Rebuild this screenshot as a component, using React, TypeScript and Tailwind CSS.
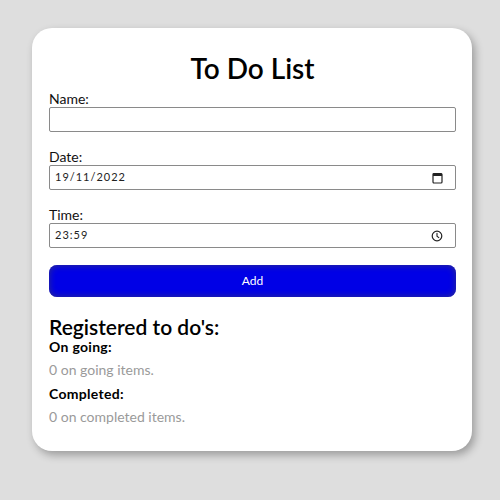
import React from 'react';

const CalendarIcon = () => (
  <svg width="11" height="12" viewBox="0 0 11 12" fill="none">
    <rect x="1" y="1.5" width="9" height="9.5" rx="1" stroke="#222" strokeWidth="1.2" />
    <rect x="1" y="1.5" width="9" height="2.5" fill="#222" />
  </svg>
);

const ClockIcon = () => (
  <svg width="12" height="12" viewBox="0 0 12 12" fill="none">
    <circle cx="6" cy="6" r="4.8" stroke="#222" strokeWidth="1.2" />
    <path d="M6 3.2V6.2L7.8 7.6" stroke="#222" strokeWidth="1.1" strokeLinecap="round" />
  </svg>
);

const Field = ({ label, children }: { label: string; children: React.ReactNode }) => (
  <div className="flex flex-col">
    <label className="text-[14px] leading-[16px] text-[#111]">{label}</label>
    {children}
  </div>
);

const App = () => {
  return (
    <div className="min-h-[500px] w-[500px] bg-[#dedede] pt-[28px]" style={{ fontFamily: 'Lato, "Noto Sans", sans-serif' }}>
      <div className="ml-[32px] w-[440px] rounded-[20px] bg-white pt-[18px] pb-[26px] pl-[17px] pr-[16px] shadow-[3px_4px_9px_rgba(0,0,0,0.3)]">
        <h1 className="text-center text-[28px] leading-[44px] font-semibold text-black">To Do List</h1>
        <div className="mt-[1px] flex flex-col gap-[17px]">
          <Field label="Name:">
            <input className="h-[25px] w-full rounded-[2px] border border-[#8a8a8a] px-2 text-[12px] outline-none" />
          </Field>
          <Field label="Date:">
            <div className="flex h-[25px] w-full items-center justify-between rounded-[2px] border border-[#8a8a8a] pl-[5px] pr-[12px]">
              <span className="text-[11px] tracking-[1px] text-[#222]">19/11/2022</span>
              <CalendarIcon />
            </div>
          </Field>
          <Field label="Time:">
            <div className="flex h-[25px] w-full items-center justify-between rounded-[2px] border border-[#8a8a8a] pl-[5px] pr-[12px]">
              <span className="text-[11px] tracking-[1px] text-[#222]">23:59</span>
              <ClockIcon />
            </div>
          </Field>
          <button className="h-[32px] w-full rounded-[8px] bg-[#0000e6] text-[12px] text-white shadow-[inset_0_0_7px_rgba(50,50,130,1)]">
            Add
          </button>
        </div>
        <h2 className="mt-[17px] text-[21px] leading-[25px] font-semibold text-black">Registered to do's:</h2>
        <h3 className="text-[14px] leading-[16px] font-bold tracking-[0.3px] text-black">On going:</h3>
        <p className="mt-[7px] text-[14px] leading-[16px] text-[#9a9a9a]">0 on going items.</p>
        <h3 className="mt-[8px] text-[14px] leading-[16px] font-bold tracking-[0.3px] text-black">Completed:</h3>
        <p className="mt-[7px] text-[14px] leading-[16px] text-[#9a9a9a]">0 on completed items.</p>
      </div>
    </div>
  );
};

export default App;
